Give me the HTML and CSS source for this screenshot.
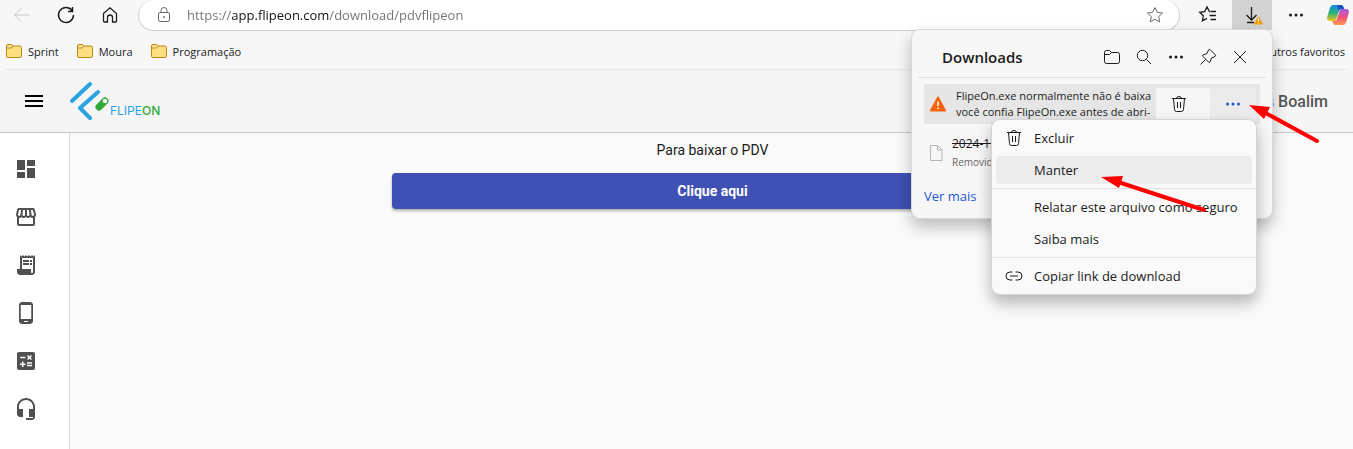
FILE: index.html
```html
<!DOCTYPE html>
<html lang="pt-BR">
<head>
    <meta charset="UTF-8">
    <meta name="viewport" content="width=device-width, initial-scale=1.0">
    <title>FlipeOn</title>
    <link rel="stylesheet" href="styles.css">
</head>
<body>

<div class="browser">
    <div class="toolbar">
        <button class="tool-button disabled" type="button" aria-label="Voltar">
            <svg width="20" height="20" viewBox="0 0 20 20"><path d="M18 10H2.500M9.500 3L2.500 10l7 7"/></svg>
        </button>
        <button class="tool-button" type="button" aria-label="Atualizar">
            <svg width="20" height="20" viewBox="0 0 20 20"><path d="M16 5.500A7.500 7.500 0 1 0 17.500 10M16.500 2v4.500H12" stroke-width="1.500"/></svg>
        </button>
        <button class="tool-button" type="button" aria-label="Início">
            <svg width="20" height="20" viewBox="0 0 20 20"><path d="M3.500 8.500L10 2.800l6.500 5.700V16q0 1-1 1h-3v-4.500a2.500 2.500 0 0 0-5 0V17h-3q-1 0-1-1z" stroke-width="1.300"/></svg>
        </button>
        <div class="address-bar">
            <svg class="lock" width="16" height="16" viewBox="0 0 16 16"><rect x="2.500" y="5.500" width="11" height="9" rx="1.500"/><path d="M5 5.500V3.500a3 3 0 0 1 6 0v2"/><circle cx="8" cy="10" r=".6"/></svg>
            <input class="address-input" type="text" aria-label="Endereço" value="https://app.flipeon.com/download/pdvflipeon">
            <svg class="star" width="18" height="18" viewBox="0 0 18 18"><path d="M9 1.500l2.300 4.800 5.200.7-3.800 3.600 1 5.300L9 13.300l-4.700 2.600 1-5.300L1.500 7l5.200-.7z"/></svg>
        </div>
        <button class="tool-button" type="button" aria-label="Favoritos">
            <svg width="20" height="20" viewBox="0 0 20 20"><path d="M12 6.500h-.5L9 2 6.700 6.600l-5 .7 3.600 3.500-.9 5L9 13.400M12.500 6.500H18M11.500 10.500H18M12.500 14.500H18" stroke-width="1.300"/></svg>
        </button>
        <button class="tool-button active" type="button" aria-label="Downloads">
            <svg width="24" height="24" viewBox="0 0 24 24"><path d="M11.500 4v13M6.500 12l5 5 5-5M7 19.500h7" stroke-width="1.300"/><path d="M18.500 14l4 7h-8z" fill="#f59b00" stroke="#f59b00" stroke-linejoin="round"/><path d="M18.500 15.500v3M18.500 19.500v1" stroke="#fff"/></svg>
        </button>
        <button class="tool-button" type="button" aria-label="Configurações e mais">
            <svg width="20" height="20" viewBox="0 0 20 20"><path class="dots" d="M4.500 10h.01M10 10h.01M15.500 10h.01"/></svg>
        </button>
        <button class="tool-button copilot" type="button" aria-label="Copilot">
            <svg width="24" height="24" viewBox="0 0 24 24">
                <defs>
                    <linearGradient id="copilotLeft" x1="0" y1="0" x2="0" y2="1"><stop offset="0" stop-color="#168be6"/><stop offset=".5" stop-color="#2ab27b"/><stop offset="1" stop-color="#f5c518"/></linearGradient>
                    <linearGradient id="copilotRight" x1="0" y1="0" x2="0" y2="1"><stop offset="0" stop-color="#a45bea"/><stop offset=".5" stop-color="#f0507e"/><stop offset="1" stop-color="#ff9a4a"/></linearGradient>
                </defs>
                <g stroke="none">
                    <path d="M7 2h8q2 0 2.700 2.500L18 6h-2.500q-2 0-2.700 2.200L10.500 16q-.7 2-2.500 2H4q-3.500 0-2.800-4L4 4.500Q4.800 2 7 2z" fill="url(#copilotLeft)"/>
                    <path d="M17 22H9.500q-2 0-2.700-2.500L6.300 18H8.500q2 0 2.700-2.200L13.500 8q.7-2 2.500-2h4q3.500 0 2.800 4L20 19.500Q19 22 17 22z" fill="url(#copilotRight)"/>
                    <path d="M11 2h4q2 0 2.700 2.500L18 6h-2.500q-2 0-2.700 2.200z" fill="#1c4fc4"/>
                </g>
            </svg>
        </button>
    </div>

    <nav class="bookmarks">
        <a href="#" class="bookmark">
            <svg width="16" height="16" viewBox="0 0 16 16"><path d="M.5 3q0-1.500 1.500-1.500h3.500L7.500 3H14q1.500 0 1.500 1.500V13q0 1.500-1.500 1.500H2Q.5 14.500.5 13zM.5 5H5l2.500-2"/></svg>
            Sprint
        </a>
        <a href="#" class="bookmark">
            <svg width="16" height="16" viewBox="0 0 16 16"><path d="M.5 3q0-1.500 1.500-1.500h3.500L7.500 3H14q1.500 0 1.500 1.500V13q0 1.500-1.500 1.500H2Q.5 14.500.5 13zM.5 5H5l2.500-2"/></svg>
            Moura
        </a>
        <a href="#" class="bookmark">
            <svg width="16" height="16" viewBox="0 0 16 16"><path d="M.5 3q0-1.500 1.500-1.500h3.500L7.500 3H14q1.500 0 1.500 1.500V13q0 1.500-1.500 1.500H2Q.5 14.500.5 13zM.5 5H5l2.500-2"/></svg>
            Programação
        </a>
        <a href="#" class="bookmark others">Outros favoritos</a>
    </nav>

    <!-- Downloads popup -->
    <section class="downloads">
        <div class="downloads-header">
            <h2>Downloads</h2>
            <button type="button" aria-label="Abrir pasta de downloads">
                <svg width="20" height="20" viewBox="0 0 20 20"><path d="M2.500 5.500q0-2 2-2h3l2 2h6q2 0 2 2v7q0 2-2 2h-11q-2 0-2-2zM2.500 7.500h5l2-2"/></svg>
            </button>
            <button type="button" aria-label="Pesquisar">
                <svg width="20" height="20" viewBox="0 0 20 20"><circle cx="8.500" cy="8.500" r="5.200"/><path d="M12.500 12.500L17 17"/></svg>
            </button>
            <button type="button" aria-label="Mais opções">
                <svg width="20" height="20" viewBox="0 0 20 20"><path class="dots" d="M4.500 10h.01M10 10h.01M15.500 10h.01"/></svg>
            </button>
            <button type="button" aria-label="Fixar">
                <svg width="20" height="20" viewBox="0 0 20 20"><path d="M12 2.500L17.500 8q.5 1-.5 1.500l-3.500 1.500-1.500 4q-.5 1-1.300.2L4.800 9.300Q4 8.500 5 8l4-1.500L10.500 3q.5-1.200 1.500-.5zM7.500 12.500L2.500 17.500"/></svg>
            </button>
            <button type="button" aria-label="Fechar">
                <svg width="20" height="20" viewBox="0 0 20 20"><path d="M4 4l12 12M16 4L4 16"/></svg>
            </button>
        </div>

        <div class="download-item warning">
            <svg width="16" height="16" viewBox="0 0 16 16"><path d="M8 1.500L15 14.500H1z" fill="#f7630c" stroke="#f7630c" stroke-width="2" stroke-linejoin="round"/><path d="M8 5.500v4.500M8 11.500v1.500" stroke="#fff" stroke-width="1.500"/></svg>
            <p>FlipeOn.exe normalmente não é baixa<br>você confia FlipeOn.exe antes de abri-</p>
            <button class="item-delete" type="button" aria-label="Excluir arquivo">
                <svg width="20" height="20" viewBox="0 0 20 20"><path d="M3 4.500h14M7.500 4.500a2.500 2 0 0 1 5 0M4.500 4.500l1 11q.2 2 2 2h5q1.800 0 2-2l1-11M8.500 8v6M11.500 8v6"/></svg>
            </button>
            <button class="item-more" type="button" aria-label="Mais ações">
                <svg width="20" height="20" viewBox="0 0 20 20"><path class="dots" d="M4.500 10h.01M10 10h.01M15.500 10h.01"/></svg>
            </button>
        </div>

        <div class="download-item removed">
            <svg width="16" height="16" viewBox="0 0 16 16"><path d="M2.500.5h7l4.500 4.500v10.500H2.500zM9.500.5V5H14"/></svg>
            <div>
                <del>2024-12</del>
                <small>Removido</small>
            </div>
        </div>

        <a href="#" class="see-more">Ver mais</a>

        <div class="context-menu" role="menu">
            <button type="button" role="menuitem">
                <svg width="20" height="20" viewBox="0 0 20 20"><path d="M3 4.500h14M7.500 4.500a2.500 2 0 0 1 5 0M4.500 4.500l1 11q.2 2 2 2h5q1.800 0 2-2l1-11M8.500 8v6M11.500 8v6"/></svg>
                <span>Excluir</span>
            </button>
            <button type="button" role="menuitem" class="selected"><span>Manter</span></button>
            <hr>
            <button type="button" role="menuitem"><span>Relatar este arquivo como seguro</span></button>
            <button type="button" role="menuitem"><span>Saiba mais</span></button>
            <hr>
            <button type="button" role="menuitem">
                <svg width="20" height="20" viewBox="0 0 20 20"><path d="M8.500 6H6a4 4 0 0 0 0 8h2.500M11.500 6H14a4 4 0 0 1 0 8h-2.500M6 10h8"/></svg>
                <span>Copiar link de download</span>
            </button>
        </div>

        <!-- Arrows pointing at the steps -->
        <svg class="arrows" width="420" height="190" viewBox="0 0 420 190">
            <path class="arrow-line" d="M350 81L405 111M206 152L292 180"/>
            <path class="arrow-head" d="M337 75l21 2-6 12zM189 147l22-1-4 12z"/>
        </svg>
    </section>
</div>

<div class="page">
    <header class="header">
        <button class="menu-toggle" type="button" aria-label="Menu">
            <svg width="24" height="24" viewBox="0 0 24 24"><path d="M3 18h18v-2H3v2zm0-5h18v-2H3v2zm0-7v2h18V6H3z"/></svg>
        </button>
        <a href="#" class="logo">
            <svg width="40" height="40" viewBox="0 0 40 40">
                <path d="M2 20L20 3M28 11L10 27l10 10" fill="none" stroke="#2ba3df" stroke-width="4" stroke-linecap="round" stroke-linejoin="round"/>
                <path d="M29 26l6-6" stroke="#2fa836" stroke-width="7" stroke-linecap="round"/>
                <circle cx="35" cy="20" r="2.300" fill="#f5f5f5"/>
            </svg>
            <span class="logo-text">FLIPE<b>ON</b></span>
        </a>
        <span class="user-name">s Boalim</span>
    </header>

    <div class="content">
        <nav class="sidebar">
            <a href="#" aria-label="Painel"><svg width="24" height="24" viewBox="0 0 24 24"><path d="M3 13h8V3H3v10zm0 8h8v-6H3v6zm10 0h8V11h-8v10zm0-18v6h8V3h-8z"/></svg></a>
            <a href="#" aria-label="Loja"><svg width="24" height="24" viewBox="0 0 24 24"><path d="M21.900 8.890l-1.050-4.370c-.22-.9-1-1.520-1.910-1.520H5.050c-.9 0-1.690.63-1.900 1.520L2.100 8.890c-.24 1.020-.02 2.060.62 2.880.08.110.19.190.28.290V19c0 1.100.9 2 2 2h14c1.100 0 2-.9 2-2v-6.940c.09-.09.2-.18.280-.28.640-.82.870-1.870.620-2.890zm-2.990-3.900l1.050 4.370c.1.420.01.840-.25 1.170-.14.180-.44.470-.94.470-.61 0-1.140-.49-1.210-1.140L16.980 5l1.930-.01zM13 5h1.960l.54 4.520c.05.390-.07.780-.33 1.070-.22.260-.54.410-.95.410-.67 0-1.220-.59-1.220-1.310V5zM8.490 9.520L9.040 5H11v4.690c0 .72-.55 1.310-1.290 1.310-.34 0-.65-.15-.89-.41-.25-.29-.37-.68-.33-1.070zm-4.450-.16L5.050 5h1.970l-.58 4.860c-.08.650-.6 1.140-1.210 1.140-.49 0-.8-.29-.93-.47-.27-.32-.36-.75-.26-1.170zM5 19v-6.030c.08.010.15.030.23.030.87 0 1.660-.36 2.240-.95.6.6 1.400.95 2.310.95.870 0 1.650-.36 2.230-.93.590.57 1.390.93 2.290.93.840 0 1.640-.35 2.240-.95.580.59 1.370.95 2.240.95.080 0 .15-.02.23-.03V19H5z"/></svg></a>
            <a href="#" aria-label="Notas"><svg width="24" height="24" viewBox="0 0 24 24"><path d="M19.500 3.500L18 2l-1.500 1.500L15 2l-1.500 1.500L12 2l-1.500 1.500L9 2 7.500 3.500 6 2v14H3v3c0 1.660 1.340 3 3 3h12c1.660 0 3-1.340 3-3V2l-1.500 1.500zM19 19c0 .55-.45 1-1 1s-1-.45-1-1v-3H8V5h11v14zM9 7h6v2H9V7zm7 0h2v2h-2V7zM9 10h6v2H9v-2zm7 0h2v2h-2v-2z"/></svg></a>
            <a href="#" aria-label="Celular"><svg width="24" height="24" viewBox="0 0 24 24"><path d="M16 1H8C6.340 1 5 2.340 5 4v16c0 1.660 1.340 3 3 3h8c1.660 0 3-1.340 3-3V4c0-1.660-1.340-3-3-3zm-2 20h-4v-1h4v1zm3.250-3H6.750V4h10.500v14z"/></svg></a>
            <a href="#" aria-label="Calculadora"><svg width="24" height="24" viewBox="0 0 24 24"><path d="M19 3H5c-1.100 0-2 .9-2 2v14c0 1.100.9 2 2 2h14c1.100 0 2-.9 2-2V5c0-1.100-.9-2-2-2zm-5.970 4.060L14.090 6l1.410 1.410L16.910 6l1.060 1.060-1.410 1.410 1.410 1.410-1.060 1.060-1.410-1.400-1.410 1.410-1.060-1.060 1.410-1.410-1.410-1.420zm-6.780.66h5v1.500h-5v-1.500zM11.500 16h-2v2H8v-2H6v-1.500h2v-2h1.500v2h2V16zm6.500 1.250h-5v-1.500h5v1.500zm0-2.500h-5v-1.500h5v1.500z"/></svg></a>
            <a href="#" aria-label="Suporte"><svg width="24" height="24" viewBox="0 0 24 24"><path d="M12 1c-4.970 0-9 4.030-9 9v7c0 1.660 1.340 3 3 3h3v-8H5v-2c0-3.870 3.130-7 7-7s7 3.130 7 7v2h-4v8h4v1h-7v2h6c1.660 0 3-1.340 3-3V10c0-4.970-4.030-9-9-9z"/></svg></a>
        </nav>
        <main class="main">
            <p>Para baixar o PDV</p>
            <button class="download-button" type="button">Clique aqui</button>
        </main>
    </div>
</div>

</body>
</html>
```
FILE: styles.css
```css
/* Root colors */
:root {
    --browser-bg: #f7f7f7;
    --header-bg: #f5f5f5;
    --page-bg: #fafafa;
    --primary-color: #3f51b5;
    --link-color: #1f56d6;
    --text-color: #1b1b1b;
    --ui-font: 'Segoe UI', 'Open Sans', sans-serif;
}

/* General styles */
* {
    box-sizing: border-box;
}

body {
    display: flex;
    flex-direction: column;
    min-height: 100vh;
    margin: 0;
    background: var(--browser-bg);
    color: var(--text-color);
    font-family: Roboto, sans-serif;
    overflow: hidden;
}

button {
    padding: 0;
    border: 0;
    background: none;
    color: inherit;
    font-family: inherit;
}

a {
    color: inherit;
    text-decoration: none;
}

svg {
    display: block;
    flex-shrink: 0;
}

/* Browser bar */
.browser {
    position: relative;
    font-family: var(--ui-font);
}

.browser svg {
    fill: none;
    stroke: currentColor;
    stroke-width: 1;
}

.browser .dots {
    stroke-width: 3;
    stroke-linecap: round;
}

.toolbar {
    display: flex;
    height: 31px;
}

.tool-button {
    display: flex;
    align-items: center;
    justify-content: center;
    width: 44px;
    height: 30px;
}

.tool-button.disabled {
    color: #c4c4c4;
}

.tool-button.active {
    width: 40px;
    margin: 0 2px;
    background: #d3d3d3;
}

.tool-button.copilot {
    width: 35px;
    padding-left: 4px;
}

.address-bar {
    display: flex;
    flex: 1;
    align-items: center;
    margin: 0 6px;
    padding: 0 15px 0 17px;
    border: 1px solid #d0d0d0;
    border-top: 0;
    border-radius: 16px;
    background: #fff;
    color: #6b6b6b;
}

.address-input {
    flex: 1;
    margin-left: 15px;
    padding: 0;
    border: 0;
    outline: none;
    /* the host name is darker than the rest of the address */
    background: linear-gradient(90deg, #717171 44px, #111 44px, #111 142px, #717171 142px);
    background-clip: text;
    color: #717171;
    -webkit-text-fill-color: transparent;
    font-family: inherit;
    font-size: 13px;
}

.bookmarks {
    display: flex;
    align-items: center;
    gap: 18px;
    height: 38px;
    padding: 2px 8px 0 6px;
    font-size: 11px;
}

.bookmark {
    display: flex;
    align-items: center;
    gap: 6px;
}

.bookmark svg {
    fill: #ffdf80;
    stroke: #b98a14;
}

.bookmark.others {
    margin-left: auto;
}

/* Downloads popup */
.downloads {
    position: absolute;
    top: 29px;
    right: 80px;
    z-index: 1;
    width: 362px;
    padding: 0 6px 12px;
    border: 1px solid #d8d8d8;
    border-radius: 9px;
    background: var(--browser-bg);
    box-shadow: 0 8px 16px rgba(0, 0, 0, 0.25);
}

.downloads-header {
    display: flex;
    align-items: center;
    gap: 12px;
    height: 48px;
    padding: 6px 16px 0 24px;
    border-bottom: 1px solid #e2e2e2;
}

.downloads-header h2 {
    margin: 0 auto 0 0;
    font-size: 15px;
    font-weight: 600;
}

.download-item {
    display: flex;
    align-items: center;
    margin: 6px 6px 0;
    padding-left: 6px;
}

.download-item.warning {
    height: 40px;
    padding-right: 4px;
    background: #e6e6e6;
}

.download-item p {
    flex: 1;
    margin: 0 0 0 10px;
    font-size: 11px;
    line-height: 16px;
    white-space: nowrap;
    overflow: hidden;
}

.item-delete,
.item-more {
    display: flex;
    align-items: center;
    justify-content: center;
    width: 54px;
    height: 32px;
    padding-right: 8px;
    background: #f6f6f6;
}

.item-more {
    width: 46px;
    padding-right: 0;
    border-radius: 4px;
    background: #ebebeb;
    color: var(--link-color);
}

.download-item.removed {
    gap: 8px;
    height: 40px;
    margin-top: 9px;
    padding-left: 4px;
    line-height: 18px;
}

.removed svg {
    color: #b5b5b5;
}

.removed del {
    display: block;
    font-size: 12px;
}

.removed small {
    display: block;
    color: #666;
    font-size: 10px;
}

.see-more {
    display: block;
    width: max-content;
    margin: 13px 6px 0;
    color: var(--link-color);
    font-size: 13px;
    line-height: 20px;
}

.context-menu {
    position: absolute;
    top: 89px;
    left: 79px;
    width: 266px;
    padding: 2px 0 0;
    border: 1px solid #d4d4d4;
    border-radius: 9px;
    background: #f9f9f9;
    box-shadow: 0 8px 16px rgba(0, 0, 0, 0.28);
}

.context-menu button {
    display: flex;
    align-items: center;
    width: calc(100% - 8px);
    height: 28px;
    margin: 2px 4px 4px;
    padding-left: 8px;
    border-radius: 4px;
    font-size: 13px;
}

.context-menu span {
    margin-left: 10px;
}

.context-menu span:first-child {
    margin-left: 30px;
}

.context-menu .selected {
    background: #ececec;
}

.context-menu hr {
    height: 1px;
    margin: 0 0 4px;
    border: 0;
    background: #e2e2e2;
}

.arrows {
    position: absolute;
    top: 0;
    left: 0;
    pointer-events: none;
}

.arrow-line {
    stroke: #f00;
    stroke-width: 4;
    stroke-linecap: round;
}

.arrow-head {
    fill: #f00;
    stroke: none;
}

/* Page */
.page {
    display: flex;
    flex: 1;
    flex-direction: column;
    border-top: 1px solid #e6e6e6;
    border-radius: 8px 8px 0 0;
    background: var(--page-bg);
    overflow: hidden;
}

.header {
    display: flex;
    align-items: center;
    height: 63px;
    padding: 0 25px 0 22px;
    border-bottom: 1px solid #c8c8c8;
    background: var(--header-bg);
}

.logo {
    display: flex;
    align-items: flex-end;
    margin-left: 24px;
}

.logo-text {
    margin-bottom: 3px;
    color: #2ba3df;
    font-family: Inter, sans-serif;
    font-size: 12px;
    line-height: 14px;
}

.logo-text b {
    color: #2fa836;
    font-weight: 500;
}

.user-name {
    margin-left: auto;
    color: #555;
    font-size: 16px;
    font-weight: 500;
}

.content {
    display: flex;
    flex: 1;
}

.sidebar {
    display: flex;
    flex-direction: column;
    gap: 24px;
    width: 70px;
    padding: 24px 14px;
    border-right: 1px solid #dcdcdc;
    background: #fff;
    fill: #505050;
}

.main {
    display: flex;
    flex: 1;
    flex-direction: column;
    align-items: center;
    padding-left: 2px;
    font-size: 14px;
}

.main p {
    margin: 7px 0 13px;
    line-height: 20px;
}

.download-button {
    width: 50%;
    height: 36px;
    border-radius: 4px;
    background: var(--primary-color);
    box-shadow: 0 2px 3px rgba(0, 0, 0, 0.3);
    color: #fff;
    font-size: 14px;
    font-weight: 700;
}
```
